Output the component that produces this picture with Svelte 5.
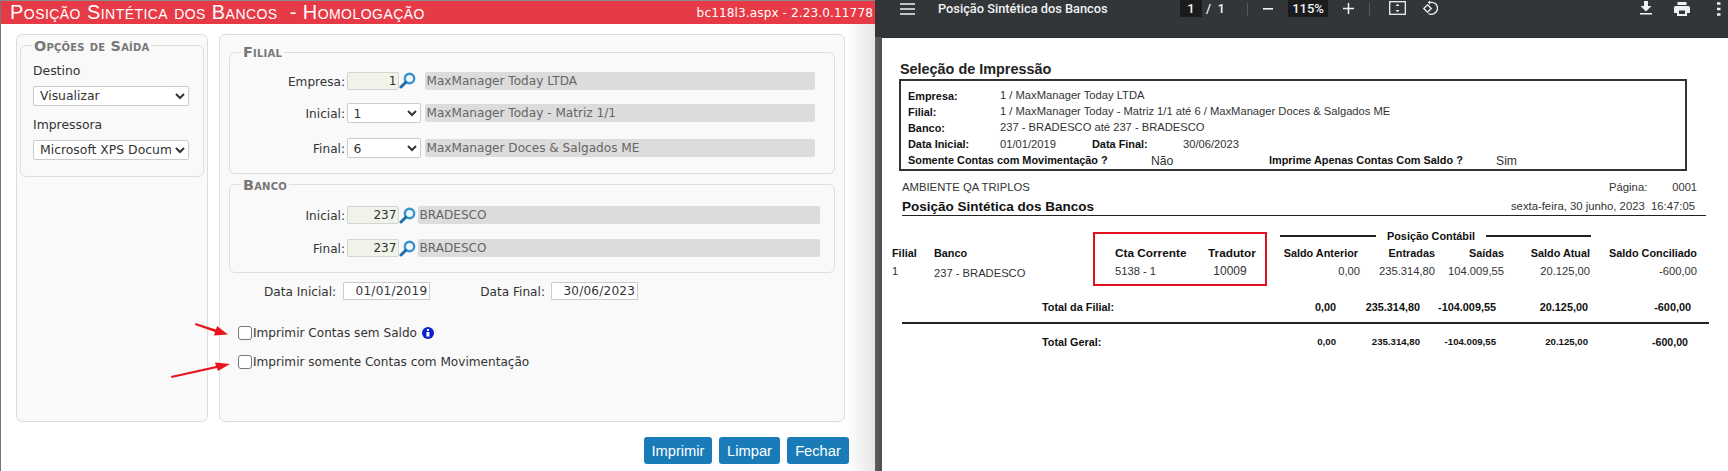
<script>
  const filial = [
    { label: 'Empresa:', kind: 'input', value: '1', text: 'MaxManager Today LTDA' },
    { label: 'Inicial:', kind: 'select', value: '1', text: 'MaxManager Today - Matriz 1/1' },
    { label: 'Final:', kind: 'select', value: '6', text: 'MaxManager Doces & Salgados ME' }
  ];
  const banco = [
    { label: 'Inicial:', value: '237', text: 'BRADESCO' },
    { label: 'Final:', value: '237', text: 'BRADESCO' }
  ];
  const heads = ['Filial', 'Banco', 'Cta Corrente', 'Tradutor', 'Saldo Anterior', 'Entradas', 'Saídas', 'Saldo Atual', 'Saldo Conciliado'];
  const vals = ['1', '237 - BRADESCO', '5138 - 1', '10009', '0,00', '235.314,80', '104.009,55', '20.125,00', '-600,00'];
  const totals = ['0,00', '235.314,80', '-104.009,55', '20.125,00', '-600,00'];
</script>

{#snippet lupa()}
  <svg class="lupa" viewBox="0 0 17 17" width="17" height="17">
    <circle cx="10.5" cy="6.5" r="4.7" fill="#eef6fb" stroke="#3a94cc" stroke-width="2.4" />
    <line x1="6.8" y1="10.2" x2="2" y2="15" stroke="#1f6fa8" stroke-width="3" stroke-linecap="round" />
  </svg>
{/snippet}

<div class="screen">
  <section class="app">
    <header class="bar">
      <h1>Posição Sintética dos Bancos &nbsp;- Homologação</h1>
      <span class="ver">bc118l3.aspx - 2.23.0.11778</span>
    </header>

    <div class="panels">
      <aside class="panel side">
        <fieldset class="out">
          <legend>Opções de Saída</legend>
          <div class="lab first">Destino</div>
          <select class="wide"><option>Visualizar</option></select>
          <div class="lab">Impressora</div>
          <select class="wide"><option>Microsoft XPS Document Writer</option></select>
        </fieldset>
      </aside>

      <main class="panel body">
        <fieldset class="fil">
          <legend>Filial</legend>
          {#each filial as r}
            <div class="row" class:sel={r.kind === 'select'}>
              <span class="rl">{r.label}</span>
              {#if r.kind === 'input'}
                <input class="code" value={r.value} readonly />
                {@render lupa()}
              {:else}
                <select class="pick"><option>{r.value}</option></select>
              {/if}
              <span class="ro">{r.text}</span>
            </div>
          {/each}
        </fieldset>

        <fieldset class="ban">
          <legend>Banco</legend>
          {#each banco as r}
            <div class="row">
              <span class="rl">{r.label}</span>
              <input class="code" value={r.value} readonly />
              {@render lupa()}
              <span class="ro short">{r.text}</span>
            </div>
          {/each}
        </fieldset>

        <div class="dates">
          <span class="dl1">Data Inicial:</span>
          <input class="date" value="01/01/2019" readonly />
          <span class="dl2">Data Final:</span>
          <input class="date" value="30/06/2023" readonly />
        </div>

        <label class="chk one">
          <input type="checkbox" />Imprimir Contas sem Saldo
          <svg class="info" viewBox="0 0 12 12" width="12" height="12">
            <circle cx="6" cy="6" r="6" fill="#0a22d0" />
            <rect x="5" y="2" width="2" height="2" fill="#fff" />
            <rect x="4.4" y="5" width="3" height="4.6" fill="#fff" />
          </svg>
        </label>
        <label class="chk two"><input type="checkbox" />Imprimir somente Contas com Movimentação</label>
      </main>
    </div>

    <div class="actions">
      <button class="b1">Imprimir</button>
      <button class="b2">Limpar</button>
      <button class="b3">Fechar</button>
    </div>

    <svg class="arrows" viewBox="0 300 240 90" width="240" height="90">
      <polygon points="195.5,323 216,329.5 217,326 228,334.500 214,335.500 215,332 195,325" fill="#e8141c" />
      <polygon points="171,376 216,366 215,362.500 230,364 218,371 217,368 171.500,378" fill="#e8141c" />
    </svg>
  </section>

  <div class="gutter"></div>

  <section class="viewer">
    <nav class="tools">
      <svg class="ham" viewBox="0 0 15 12" width="15" height="12"><path d="M0 1h15M0 6h15M0 11h15" stroke="#f1f1f1" stroke-width="1.6" /></svg>
      <span class="doc">Posição Sintética dos Bancos</span>
      <span class="pg">1</span>
      <span class="of">/ &nbsp;1</span>
      <i class="sep"></i>
      <svg class="minus" viewBox="0 0 10 2" width="10" height="2"><rect width="10" height="1.6" fill="#f1f1f1" /></svg>
      <span class="zoom">115%</span>
      <svg class="plus" viewBox="0 0 11 11" width="11" height="11"><path d="M5.5 0v11M0 5.5h11" stroke="#f1f1f1" stroke-width="1.5" /></svg>
      <i class="sep s2"></i>
      <svg class="fit" viewBox="0 0 17 14" width="17" height="14">
        <rect x=".7" y=".7" width="15.6" height="12.6" fill="none" stroke="#f1f1f1" stroke-width="1.3" />
        <path d="M6.500 5 8.500 2.800 10.500 5zM6.500 9 8.500 11.200 10.500 9z" fill="#f1f1f1" />
      </svg>
      <svg class="rot" viewBox="0 0 16 16" width="16" height="16">
        <path d="M8 2.500a6 6 0 1 1-1.500 11" fill="none" stroke="#f1f1f1" stroke-width="1.300" />
        <path d="M8 .5v4L5.800 2.500z" fill="#f1f1f1" />
        <path d="M5.500 4.800 9.300 8.500 5.500 12.200 1.700 8.500z" fill="none" stroke="#f1f1f1" stroke-width="1.300" />
      </svg>
      <svg class="dl" viewBox="0 0 12 14" width="12" height="14"><path d="M4 0h4v5h3.500L6 10.500.5 5H4zM0 12h12v1.600H0z" fill="#f1f1f1" /></svg>
      <svg class="pr" viewBox="0 0 16 14" width="16" height="14"><path d="M3.500 0h9v3h-9zM1.500 4h13A1.500 1.500 0 0 1 16 5.500V11h-3v3H3v-3H0V5.500A1.500 1.500 0 0 1 1.500 4zM5 8.500V12h6V8.500z" fill="#f1f1f1" /></svg>
      <svg class="dots" viewBox="0 0 4 14" width="4" height="14"><path d="M0 1.500h3.500M0 7h3.500M0 12.500h3.500" stroke="#f1f1f1" stroke-width="2.500" /></svg>
    </nav>

    <article class="page">
      <h2>Seleção de Impressão</h2>
      <div class="box">
        <div class="bl"><b>Empresa:</b><span>1 / MaxManager Today LTDA</span></div>
        <div class="bl"><b>Filial:</b><span>1 / MaxManager Today - Matriz 1/1 até 6 / MaxManager Doces &amp; Salgados ME</span></div>
        <div class="bl"><b>Banco:</b><span>237 - BRADESCO até 237 - BRADESCO</span></div>
        <div class="bl dt"><b>Data Inicial:</b><span>01/01/2019</span><b>Data Final:</b><span>30/06/2023</span></div>
        <div class="bl last"><b>Somente Contas com Movimentação ?</b><span>Não</span><b>Imprime Apenas Contas Com Saldo ?</b><span>Sim</span></div>
      </div>

      <div class="rhead r1"><span>AMBIENTE QA TRIPLOS</span><span class="pgl">Página:</span><span class="pgn">0001</span></div>
      <div class="rhead r2"><strong>Posição Sintética dos Bancos</strong><span class="when">sexta-feira, 30 junho, 2023 &nbsp;16:47:05</span></div>

      <div class="table">
        <div class="group"><i></i><b>Posição Contábil</b><i></i></div>
        <div class="grid hd">
          {#each heads as h}<b>{h}</b>{/each}
        </div>
        <div class="grid vl">
          {#each vals as v}<span>{v}</span>{/each}
        </div>
        <div class="tot tf">
          <b>Total da Filial:</b>
          {#each totals as t}<b>{t}</b>{/each}
        </div>
        <div class="rule"></div>
        <div class="tot tg">
          <b>Total Geral:</b>
          {#each totals as t}<b>{t}</b>{/each}
        </div>
        <div class="redbox"></div>
      </div>
    </article>
  </section>
</div>

<style>
  :global(body) { margin: 0; background: #fff; overflow: hidden; }
  .screen { display: flex; width: 1728px; height: 471px; overflow: hidden; font-family: "DejaVu Sans", Verdana, sans-serif; }

  /* left application */
  .app {
    position: relative; width: 875px; height: 471px; box-sizing: border-box; flex: none;
    border-left: 1px solid #777;
    background: linear-gradient(to right, #fff 845px, #e6e6e6 874px);
    color: #333; font-size: 12.1px;
  }
  .bar {
    height: 23px; border-top: 1px solid #8a8a8a; background: #e63a46; color: #fff; display: flex; justify-content: space-between; align-items: center;
    padding: 0 2px 0 9px;
  }
  h1 { margin: 0; font: 400 20px/23px "Liberation Sans", Arial, sans-serif; font-variant: small-caps; letter-spacing: .45px; }
  .ver { font-size: 12.1px; letter-spacing: .1px; }

  .panels { display: flex; gap: 11px; margin: 10px 0 0 15px; }
  .panel { box-sizing: border-box; height: 388px; border: 1.5px solid #ddd; border-radius: 6px; background: #f9f9f9; }
  .side { width: 192px; padding: 0 3px; }
  .body { width: 626px; padding: 0 9px; }

  fieldset { margin: 0; box-sizing: border-box; border: 1.5px solid #ddd; border-radius: 6px; padding: 0; min-width: 0; }
  legend { font-weight: 700; font-variant: small-caps; color: #777; font-size: 14.4px; letter-spacing: .2px; line-height: 14px; margin-left: 11px; padding: 0 2px; }
  .out legend { margin-left: -1px; }
  .out { height: 138px; margin-top: 3.5px; padding: 0 12px; }
  .lab { line-height: 16px; margin-top: 11px; margin-bottom: 7px; color: #333; font-size: 12.4px; }
  .lab.first { margin-top: 10px; }
  select { font: 12.4px "DejaVu Sans", Verdana, sans-serif; color: #333; background: #fff; border: 1px solid #ccc; border-radius: 2px; box-sizing: border-box; padding: 0 1px; margin: 0; }
  .wide { display: block; width: 156px; height: 20px; padding-left: 2px; }

  .fil { height: 128.5px; margin-top: 10px; }
  .ban { height: 95px; margin-top: 4px; }
  .row { display: flex; align-items: center; height: 19px; margin-bottom: 14px; }
  .row:last-child { margin-bottom: 0; }
  .fil .row:first-of-type { margin-top: 12px; margin-bottom: 13px; }
  .ban .row:first-of-type { margin-top: 14px; }
  .fil .row.sel { height: 20px; margin-bottom: 15px; }
  .fil .row.sel:last-child { margin-bottom: 0; }
  .rl { width: 115px; text-align: right; margin-right: 1.5px; padding-top: 2px; }
  .code { box-sizing: border-box; width: 52px; height: 18px; text-align: right; background: #f0f3e8; border: 1px solid #d4d4d4; border-radius: 2px; font: 12.1px "DejaVu Sans", Verdana, sans-serif; color: #333; padding: 0 1px 0 0; margin: 0; outline: 0; }
  .lupa { flex: none; }
  .pick { width: 74px; height: 20px; padding-left: 2px; }
  .ro { box-sizing: border-box; height: 18px; line-height: 19px; background: #dcdcdc; color: #666; padding-left: 2px; border-radius: 2px; margin-left: 9px; width: 390.5px; white-space: nowrap; }
  .sel .ro { margin-left: 4px; }
  .ro.short { margin-left: 2px; width: 402px; }

  .dates { display: flex; align-items: center; height: 18px; margin-top: 9px; }
  .dl1 { margin-left: 35px; width: 73.8px; padding-top: 2px; }
  .dl2 { margin-left: 50px; width: 65.3px; padding-top: 2px; }
  .date { box-sizing: border-box; width: 87.5px; height: 18px; text-align: right; font: 12.1px "DejaVu Sans", Verdana, sans-serif; letter-spacing: .2px; color: #333; border: 1px solid #ccc; background: #fff; padding: 0 2px; margin: 0 0 0 5px; outline: 0; border-radius: 1px; }

  .chk { display: flex; align-items: center; height: 14px; margin-left: 9px; white-space: nowrap; }
  .chk input { appearance: none; box-sizing: border-box; width: 13.5px; height: 14px; margin: 0 1.5px 0 0; background: #fff; border: 1px solid #767676; border-radius: 3px; }
  .one { margin-top: 26px; }
  .two { margin-top: 15px; }
  .info { margin-left: 5px; }

  .actions { display: flex; gap: 7px; margin: 15px 0 0 643px; }
  button { height: 27px; border: 0; border-radius: 3px; background: #1a7bb9; color: #fff; font: 14.7px "Liberation Sans", Arial, sans-serif; padding: 0; }
  .b1 { width: 68px; } .b2 { width: 61px; } .b3 { width: 62px; }

  .arrows { position: absolute; left: -1px; top: 300px; pointer-events: none; }

  .gutter {
    flex: none; width: 7px;
    background: linear-gradient(#323639 37px, transparent 37px), linear-gradient(to right, #5d5f61, #4c4f52);
  }

  /* pdf viewer */
  .viewer { flex: none; width: 846px; background: #fff; font-family: "Liberation Sans", Arial, sans-serif; color: #222; }
  .tools { display: flex; align-items: flex-start; height: 37px; background: #323639; border-bottom: 1px solid #2a2d30; color: #f1f1f1; font: 500 13px/17px Roboto, sans-serif; }
  .tools > * { flex: none; }
  .ham { margin: 3px 0 0 18px; }
  .doc { margin-left: 23px; width: 242px; font-size: 12.8px; white-space: nowrap; }
  .pg { width: 22px; height: 17px; background: #191b1c; text-align: center; }
  .of { margin-left: 4px; width: 41px; white-space: nowrap; }
  .sep { display: block; margin-top: 3px; width: 1px; height: 13px; background: #55585b; }
  .minus { margin: 8px 0 0 15px; }
  .zoom { margin-left: 15px; width: 40px; height: 17px; background: #191b1c; text-align: center; }
  .plus { margin: 3px 0 0 15px; }
  .s2 { margin-left: 15px; }
  .fit { margin: 1px 0 0 19px; }
  .rot { margin-left: 16px; }
  .dl { margin: 1px 0 0 202px; }
  .pr { margin: 2px 0 0 22px; }
  .dots { margin: 2px 0 0 27px; }

  .page { padding: 0 0 0 18px; overflow: hidden; }
  h2 { margin: 22px 0 1px; font: 700 14.4px/18px "Liberation Sans", Arial, sans-serif; color: #222; }
  .box { box-sizing: border-box; width: 788px; height: 92px; margin-left: -1px; border: 2px solid #333; padding: 7px 0 0 7px; font-size: 11.2px; }
  .bl { display: grid; grid-template-columns: 92px 1fr; line-height: 16px; white-space: nowrap; color: #333; }
  .bl span { margin-top: -1.5px; }
  .bl b { color: #111; font-size: 10.9px; }
  .bl.dt { grid-template-columns: 92px 92px 91px 1fr; }
  .bl.dt span { margin-top: 0; }
  .bl.last { grid-template-columns: 243px 118px 227px 1fr; }
  .bl.last span { margin-top: 0; font-size: 12.2px; line-height: 18px; }

  .rhead { display: flex; align-items: center; margin-left: 2px; width: 795px; font-size: 11.3px; color: #333; }
  .r1 { margin-top: 8px; height: 16px; }
  .pgl { margin-left: auto; margin-right: 25px; }
  .pgn { font-size: 11.1px; }
  .r2 { margin-top: 2px; height: 18px; width: 804px; border-bottom: 1.5px solid #222; }
  .r2 strong { font-size: 13.5px; color: #111; }
  .when { margin-left: auto; margin-right: 11px; }

  .table { position: relative; margin: 12px 0 0 -8px; width: 830px; font-size: 11.2px; color: #333; white-space: nowrap; }
  .table b { color: #111; font-size: 10.85px; }
  .group { display: flex; align-items: center; margin-left: 388px; width: 311px; height: 16px; }
  .group i { display: block; height: 1.5px; background: #222; }
  .group i:first-child { width: 96px; margin-right: 11px; }
  .group i:last-child { width: 105px; margin-left: 11px; }
  .group b { width: 88px; white-space: nowrap; }

  .grid { display: grid; grid-template-columns: 42px 181px 93px 44px 106px 77px 69px 86px 107px; align-items: center; }
  .grid > :nth-child(n+5) { text-align: right; }
  .grid > :nth-child(4) { text-align: center; }
  .hd { height: 16px; margin-top: 1px; }
  .table .hd > :nth-child(3), .table .hd > :nth-child(4) { font-size: 11.8px; }
  .vl { height: 16px; margin-top: 2px; }
  .vl > :nth-child(2) { margin-top: 3px; }
  .vl > :nth-child(4) { font-size: 12px; }
  .vl > :nth-child(5) { margin-right: -2px; }

  .tot { display: grid; grid-template-columns: 150px 208px 86px 84px 76px 92px 103px; align-items: center; height: 16px; width: 799px; }
  .tot > :nth-child(n+2) { text-align: right; }
  .tot > :first-child { grid-column: 1 / 3; padding-left: 150px; text-align: left; }
  .tf { margin-top: 20px; }
  .rule { height: 1.5px; margin: 7px 0 0 10px; width: 807px; background: #222; }
  .tg { margin-top: 10px; }
  .table .tg > :nth-child(n+2) { font-size: 9.65px; }
  .table .tg > :last-child { font-size: 10.6px; padding-right: 3px; }

  .redbox { position: absolute; left: 201px; top: 3.5px; width: 174px; height: 54.5px; box-sizing: border-box; border: 2.5px solid #e0101c; }
</style>
